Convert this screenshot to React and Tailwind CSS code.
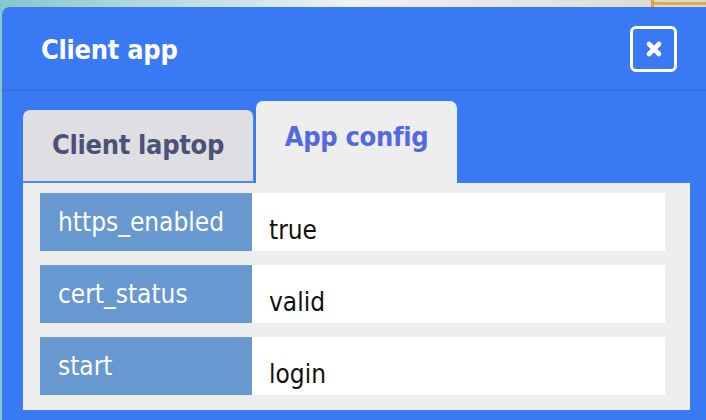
import React from "react";

const rows = [
  { key: "https_enabled", value: "true" },
  { key: "cert_status", value: "valid" },
  { key: "start", value: "login" },
];

const font = { fontFamily: '"DejaVu Sans Condensed", "DejaVu Sans", sans-serif' };

export default function App() {
  return (
    <div
      className="w-[706px] h-[420px] overflow-hidden pl-[2px] pt-[7px] bg-gradient-to-r from-[#86c6cc] via-[#eef2f2] to-[#d9d8cf] relative"
      style={font}
    >
      <div className="absolute left-[651px] top-0 w-[3px] h-[7px] bg-[#e3a23a]" />
      <div className="absolute left-[654px] top-[2px] right-0 h-[3px] bg-[#e8a84a]" />
      <div className="h-full bg-[#3a79f4] rounded-tl-lg flex flex-col">
        {/* header */}
        <div className="h-[84px] shrink-0 flex items-center justify-between pl-[39px] pr-[29px] border-b border-[#3069d6]">
          <h1 className="text-white font-bold text-[27px] tracking-[-0.3px] mt-[4px]">Client app</h1>
          <button className="w-[47px] h-[46px] rounded-[6px] border-[3px] border-white flex items-center justify-center">
            <svg width="18" height="18" viewBox="0 0 18 18">
              <path d="M4 4 L14 14 M14 4 L4 14" stroke="white" strokeWidth="4.6" strokeLinecap="round" />
            </svg>
          </button>
        </div>

        {/* tabs */}
        <div className="flex items-end pl-[21px] pt-[10px] h-[92px] shrink-0">
          <div className="w-[231px] h-[73px] bg-[#dfdee2] rounded-t-[7px] border-b-2 border-r border-[#4f86ee] flex items-center justify-center">
            <span className="text-[#4b5177] font-bold text-[27px] tracking-[-0.3px]">Client laptop</span>
          </div>
          <div className="ml-[2px] w-[201px] h-[82px] bg-[#eeeeee] rounded-t-[7px] flex justify-center pt-[16px]">
            <span className="text-[#5468e2] font-bold text-[27px] tracking-[-0.3px]">App config</span>
          </div>
        </div>

        {/* panel */}
        <div className="ml-[21px] w-[667px] h-[227px] bg-[#eeeeee] pl-[17px] pr-[25px] pt-[10px] flex flex-col gap-[14px]">
          {rows.map((r) => (
            <div key={r.key} className="flex h-[58px]">
              <div className="w-[212px] bg-[#6898d0] text-white text-[26px] pl-[18px] pt-[16px] leading-none">
                {r.key}
              </div>
              <div className="flex-1 bg-white text-[#111] text-[26px] pl-[17px] pt-[24px] leading-none">
                {r.value}
              </div>
            </div>
          ))}
        </div>
      </div>
    </div>
  );
}
